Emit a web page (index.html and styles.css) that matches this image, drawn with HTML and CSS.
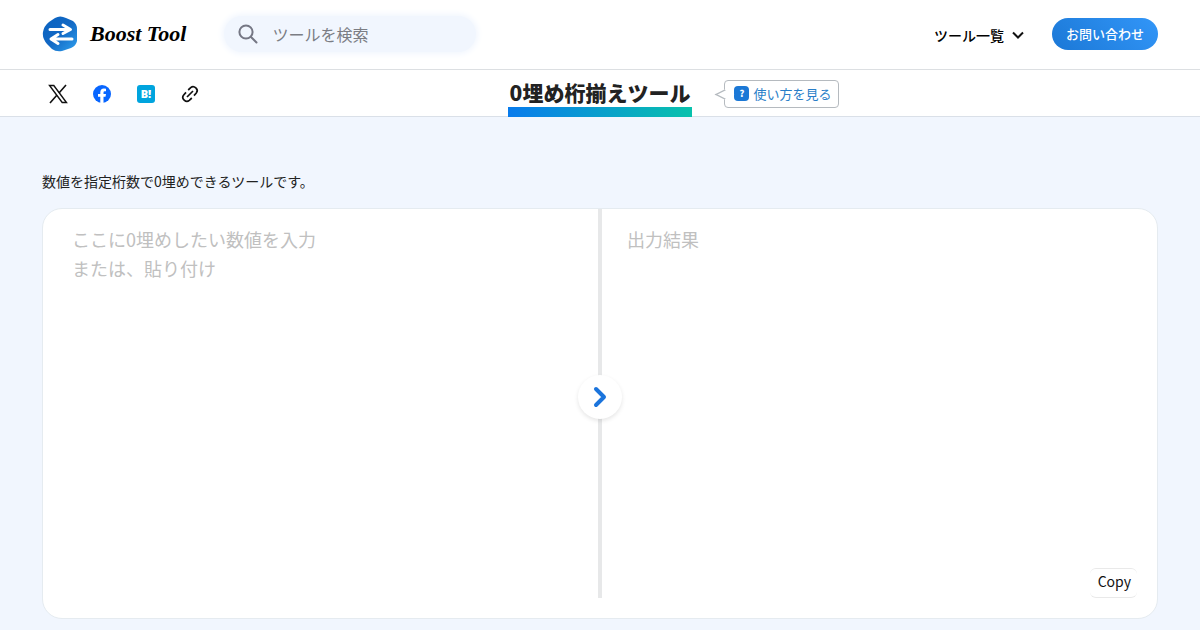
FILE: index.html
```html
<!DOCTYPE html>
<html lang="ja">
<head>
    <meta charset="UTF-8">
    <meta name="viewport" content="width=device-width, initial-scale=1.0">
    <title>0埋め桁揃えツール | Boost Tool</title>
    <link rel="stylesheet" href="styles.css">
</head>
<body>
    <header class="header">
        <a class="logo" href="#">
            <svg width="36" height="36" viewBox="0 0 36 36" aria-hidden="true">
                <defs>
                    <linearGradient id="logo-color" x1="0" y1="0" x2="1" y2="1">
                        <stop offset="0" stop-color="#0a62c0"/>
                        <stop offset="0.5" stop-color="#1268c4"/>
                        <stop offset="1" stop-color="#2fa0ee"/>
                    </linearGradient>
                </defs>
                <path fill="url(#logo-color)" d="M13 2Q18-1 24 2L31 5Q35 8 35 13V25Q34 30 29 32L20 35Q14 36 10 33L5 28Q0 22 1 16Q2 10 7 6Z"/>
                <path fill="none" stroke="#fff" stroke-width="3" stroke-linecap="round" stroke-linejoin="round" d="M8 13.500H28M21 9L28.500 13.500L21 17.500M30 23H10M16 18.500L9 23L16 27.500"/>
            </svg>
            <span>Boost Tool</span>
        </a>
        <form class="search">
            <label for="search">
                <svg width="20" height="20" viewBox="0 0 20 20" role="img" aria-label="検索">
                    <circle cx="8" cy="8" r="6.600"/>
                    <path d="M13 13L18.500 18.500"/>
                </svg>
            </label>
            <input type="search" id="search" placeholder="ツールを検索">
        </form>
        <nav class="nav">
            <button class="nav-menu" type="button">ツール一覧
                <svg width="12" height="8" viewBox="0 0 12 8" aria-hidden="true"><path d="M1 1.500L6 6.500L11 1.500"/></svg>
            </button>
            <a class="contact" href="#">お問い合わせ</a>
        </nav>
    </header>

    <div class="title-bar">
        <div class="share">
            <a href="#" aria-label="X">
                <svg width="20" height="20" viewBox="0 0 20 20" fill="none" stroke="#111">
                    <path stroke-width="1.400" d="M1.500 1.500H5.800L18.500 18.500H14.200Z"/>
                    <path stroke-width="1.600" d="M18 1L11 9M8.800 11.300L2 19"/>
                </svg>
            </a>
            <a href="#" aria-label="Facebook">
                <svg width="20" height="20" viewBox="0 0 20 20">
                    <circle cx="10" cy="10" r="9" fill="#0866ff"/>
                    <path fill="#fff" d="M8.300 19V12.800H6V9.900H8.300V8.300Q8.300 4.500 12 4.500Q13.300 4.500 14 4.700V7.300H12.700Q11.500 7.300 11.500 8.600V9.900H14L13.500 12.800H11.500V19Z"/>
                </svg>
            </a>
            <a href="#" aria-label="はてなブックマーク"><span class="hatena">B!</span></a>
            <a href="#" aria-label="リンクをコピー">
                <svg width="20" height="20" viewBox="0 0 20 20" fill="none" stroke="#111" stroke-width="1.700">
                    <path d="M7 13L13 7M8.200 6L10.700 3.700C14 .8 19.200 5.500 16.300 9L14 11.600M11.800 14L9.300 16.300C6 19.200 .8 14.500 3.700 11L6 8.400"/>
                </svg>
            </a>
        </div>
        <h1 class="title">0埋め桁揃えツール</h1>
        <div class="help-area">
            <a class="help" href="#"><span class="help-icon">?</span>使い方を見る</a>
        </div>
    </div>

    <main class="main">
        <p class="lead">数値を指定桁数で0埋めできるツールです。</p>
        <div class="converter">
            <div class="pane pane-input">
                <textarea id="input" aria-label="入力" placeholder="ここに0埋めしたい数値を入力&#10;または、貼り付け"></textarea>
            </div>
            <div class="divider">
                <span class="arrow">
                    <svg width="14" height="22" viewBox="0 0 14 22" aria-hidden="true"><path d="M3 3L11 11L3 19"/></svg>
                </span>
            </div>
            <div class="pane">
                <textarea id="output" aria-label="出力" placeholder="出力結果" readonly></textarea>
                <button class="copy" type="button">Copy</button>
            </div>
        </div>
    </main>
</body>
</html>
```

FILE: styles.css
```css
* {
    box-sizing: border-box;
}
body {
    margin: 0;
    background-color: #f1f6fe;
    color: #222;
    font-family: "Noto Sans CJK JP", sans-serif;
}
a {
    color: inherit;
    text-decoration: none;
}
button, input, textarea {
    font-family: inherit;
}
.header {
    display: flex;
    align-items: center;
    height: 70px;
    padding: 0 42px 2px;
    background-color: #fff;
    border-bottom: 1px solid #dcdfe2;
}
.logo {
    display: flex;
    align-items: center;
    gap: 12px;
    color: #000;
    font: italic bold 22px/32px "Liberation Serif", serif;
}
.search {
    display: flex;
    align-items: center;
    gap: 14px;
    width: 252px;
    height: 36px;
    margin-left: 38px;
    padding: 0 14px;
    border-radius: 18px;
    background-color: #f1f6fe;
    box-shadow: 0 0 6px 2px #f1f6fe;
}
.search label {
    display: flex;
}
.search svg {
    fill: none;
    stroke: #757784;
    stroke-width: 2;
    stroke-linecap: round;
}
.search input {
    flex: 1;
    min-width: 0;
    padding: 0;
    border: 0;
    outline: 0;
    background: none;
    font-size: 16px;
}
.search input::placeholder {
    color: #7b7d84;
}
.nav {
    display: flex;
    align-items: center;
    gap: 28px;
    margin-left: auto;
}
.nav-menu {
    display: flex;
    align-items: center;
    gap: 8px;
    padding: 2px 0 0;
    border: 0;
    background: none;
    color: #000;
    font-size: 14px;
    font-weight: 500;
}
.nav-menu svg {
    fill: none;
    stroke: #111;
    stroke-width: 2;
}
.contact {
    padding: 0 14px;
    border-radius: 16px;
    background: linear-gradient(45deg, #1b78d6, #3296f8);
    color: #fff;
    font-size: 13px;
    font-weight: 500;
    line-height: 32px;
}
.title-bar {
    display: grid;
    grid-template-columns: 1fr auto 1fr;
    height: 47px;
    padding: 0 42px;
    background-color: #fff;
    border-bottom: 1px solid #dae0e8;
}
.share {
    display: flex;
    align-items: center;
    gap: 24px;
    padding-left: 6px;
}
.share a {
    display: flex;
    justify-content: center;
    width: 20px;
}
.hatena {
    width: 18px;
    border-radius: 3px;
    background-color: #00a4de;
    color: #fff;
    font: 800 11px/18px "Open Sans", sans-serif;
    text-align: center;
}
.title {
    height: 47px;
    margin: 0;
    padding: 4px 2px 0;
    border-bottom: 10px solid;
    border-image: linear-gradient(90deg, #087bed, #08c2ac) 1;
    font-size: 21px;
    font-weight: 900;
    line-height: 36px;
}
.help-area {
    display: flex;
    align-items: center;
    padding-left: 32px;
}
.help {
    position: relative;
    display: flex;
    align-items: center;
    gap: 4px;
    height: 28px;
    padding: 0 7px 0 9px;
    border: 1px solid #b5babf;
    border-radius: 4px;
    color: #287ec8;
    font-size: 13px;
    line-height: 18px;
}
.help::before {
    content: "";
    position: absolute;
    top: 10px;
    left: -4px;
    width: 6px;
    height: 6px;
    border: solid #b5babf;
    border-width: 0 0 1px 1px;
    background-color: #fff;
    transform: scaleX(2) rotate(45deg);
}
.help-icon {
    width: 15px;
    border-radius: 4px;
    background-color: #1b78d6;
    color: #fff;
    font-size: 9px;
    font-weight: 900;
    line-height: 15px;
    text-align: center;
}
.main {
    padding: 52px 42px 12px;
}
.lead {
    margin: 0 0 15px;
    font-size: 14px;
    line-height: 24px;
}
.converter {
    display: flex;
    min-height: 411px;
    border: 1px solid #e5ebf0;
    border-radius: 20px;
    background-color: #fff;
}
.pane {
    display: flex;
    flex-direction: column;
    flex: 1;
    min-width: 0;
    padding: 16px 20px 20px 25px;
}
.pane-input {
    padding-right: 16px;
    padding-left: 29px;
}
.pane textarea {
    flex: 1;
    padding: 0;
    border: 0;
    outline: 0;
    resize: none;
    background: none;
    font-size: 18px;
    line-height: 29px;
}
.pane textarea::placeholder {
    color: #c0c0c0;
}
.divider {
    display: flex;
    align-items: center;
    justify-content: center;
    width: 4px;
    margin-bottom: 20px;
    background-color: #e7e8e9;
}
.arrow {
    display: flex;
    align-items: center;
    justify-content: center;
    flex: none;
    width: 44px;
    height: 44px;
    margin-bottom: 14px;
    border-radius: 50%;
    background-color: #fff;
    box-shadow: 0 2px 4px rgba(0, 0, 0, 0.1);
}
.arrow svg {
    fill: none;
    stroke: #1b74dc;
    stroke-width: 4;
    stroke-linecap: round;
    stroke-linejoin: round;
}
.copy {
    align-self: flex-end;
    height: 30px;
    padding: 0 6px 5px 8px;
    border: 1px solid #e9e9e9;
    border-width: 1px 0;
    border-radius: 6px;
    background-color: #fff;
    color: #111;
    font-size: 14px;
}
```
